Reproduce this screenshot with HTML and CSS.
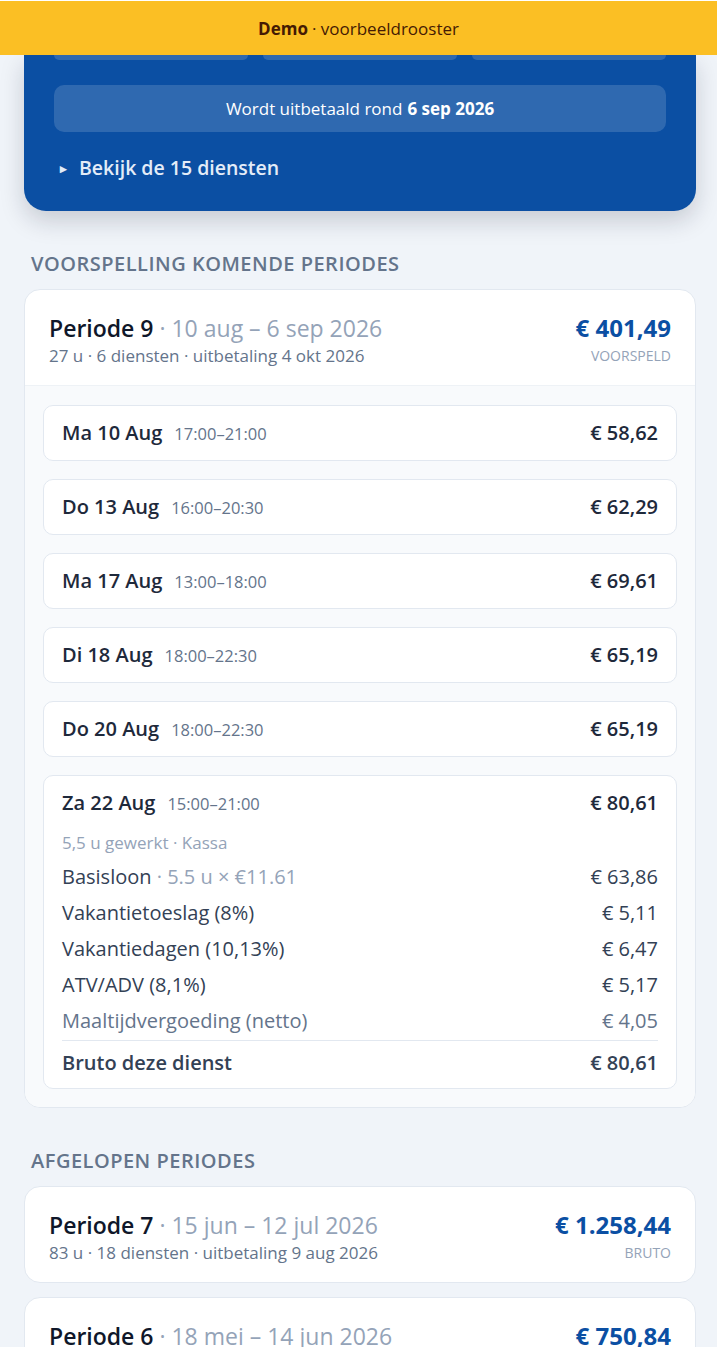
FILE: index.html
```html
<!DOCTYPE html>
<html lang="nl">
<head>
	<meta charset="utf-8">
	<title>Loonrooster · Demo</title>
	<link rel="stylesheet" href="styles.css">
</head>
<body>
	<div class="demo-bar"><b>Demo</b> · voorbeeldrooster</div>

	<main class="page">
		<section class="current">
			<div class="stats">
				<div class="stat"></div>
				<div class="stat"></div>
				<div class="stat"></div>
			</div>
			<div class="payout">Wordt uitbetaald rond <b>6 sep 2026</b></div>
			<div class="toggle"><span class="caret">&#9656;</span> Bekijk de 15 diensten</div>
		</section>

		<h2 class="section-title">Voorspelling komende periodes</h2>
		<div class="period-list">
			<div class="period">
				<div class="period-head">
					<div>
						<div class="period-title">Periode 9 <span class="range">· 10 aug – 6 sep 2026</span></div>
						<div class="period-sub">27 u · 6 diensten · uitbetaling 4 okt 2026</div>
					</div>
					<div class="period-total">
						<div class="amount">€ 401,49</div>
						<div class="tag">Voorspeld</div>
					</div>
				</div>
				<div class="period-body">
					<div class="shift">
						<div class="shift-row"><div><span class="day">Ma 10 Aug</span><span class="time">17:00–21:00</span></div><span class="pay">€ 58,62</span></div>
					</div>
					<div class="shift">
						<div class="shift-row"><div><span class="day">Do 13 Aug</span><span class="time">16:00–20:30</span></div><span class="pay">€ 62,29</span></div>
					</div>
					<div class="shift">
						<div class="shift-row"><div><span class="day">Ma 17 Aug</span><span class="time">13:00–18:00</span></div><span class="pay">€ 69,61</span></div>
					</div>
					<div class="shift">
						<div class="shift-row"><div><span class="day">Di 18 Aug</span><span class="time">18:00–22:30</span></div><span class="pay">€ 65,19</span></div>
					</div>
					<div class="shift">
						<div class="shift-row"><div><span class="day">Do 20 Aug</span><span class="time">18:00–22:30</span></div><span class="pay">€ 65,19</span></div>
					</div>
					<div class="shift open">
						<div class="shift-row"><div><span class="day">Za 22 Aug</span><span class="time">15:00–21:00</span></div><span class="pay">€ 80,61</span></div>
						<div class="shift-meta">5,5 u gewerkt · Kassa</div>
						<div class="line"><span>Basisloon <span class="muted">· 5.5 u × €11.61</span></span><span>€ 63,86</span></div>
						<div class="line"><span>Vakantietoeslag (8%)</span><span>€ 5,11</span></div>
						<div class="line"><span>Vakantiedagen (10,13%)</span><span>€ 6,47</span></div>
						<div class="line"><span>ATV/ADV (8,1%)</span><span>€ 5,17</span></div>
						<div class="line soft"><span>Maaltijdvergoeding (netto)</span><span>€ 4,05</span></div>
						<div class="line total"><span>Bruto deze dienst</span><span>€ 80,61</span></div>
					</div>
				</div>
			</div>
		</div>

		<h2 class="section-title">Afgelopen periodes</h2>
		<div class="period-list">
			<div class="period">
				<div class="period-head">
					<div>
						<div class="period-title">Periode 7 <span class="range">· 15 jun – 12 jul 2026</span></div>
						<div class="period-sub">83 u · 18 diensten · uitbetaling 9 aug 2026</div>
					</div>
					<div class="period-total">
						<div class="amount">€ 1.258,44</div>
						<div class="tag">Bruto</div>
					</div>
				</div>
			</div>
			<div class="period">
				<div class="period-head">
					<div>
						<div class="period-title">Periode 6 <span class="range">· 18 mei – 14 jun 2026</span></div>
					</div>
					<div class="period-total">
						<div class="amount">€ 750,84</div>
					</div>
				</div>
			</div>
		</div>
	</main>
</body>
</html>
```

FILE: styles.css
```css
* {
	box-sizing: border-box;
}
body {
	margin: 0;
	background-color: #f0f4f9;
	color: #1e293b;
	font-family: "Open Sans", "Noto Sans", sans-serif;
}
.demo-bar {
	position: sticky;
	top: 0;
	z-index: 10;
	height: 55px;
	border-top: 1px solid #fff;
	background-color: #fbbf24;
	color: #451a03;
	font-size: 17px;
	display: flex;
	align-items: center;
	justify-content: center;
	gap: 4px;
}
.page {
	padding: 0 21px 0 24px;
}
.current {
	background-color: #0b4fa3;
	color: #fff;
	border-radius: 0 0 22px 22px;
	padding: 0 30px 30px;
	box-shadow: 0 10px 24px rgba(15, 23, 42, 0.18);
}
.stats {
	display: grid;
	grid-template-columns: 1fr 1fr 1fr;
	gap: 15px;
}
.stat {
	height: 5px;
	background-color: rgba(255, 255, 255, 0.15);
	border-radius: 0 0 10px 10px;
}
.payout {
	margin-top: 25px;
	height: 47px;
	border-radius: 10px;
	background-color: rgba(255, 255, 255, 0.15);
	display: flex;
	align-items: center;
	justify-content: center;
	gap: 5px;
	font-size: 17px;
}
.toggle {
	margin-top: 23px;
	font-size: 19.5px;
	font-weight: 600;
	line-height: 26px;
	color: #e3ecf8;
	display: flex;
	align-items: center;
	gap: 12px;
	padding-left: 6px;
}
.caret {
	font-size: 13px;
}
.section-title {
	margin: 40px 0 12px 7px;
	font-size: 20px;
	line-height: 26px;
	font-weight: 600;
	text-transform: uppercase;
	letter-spacing: 0.5px;
	color: #64748b;
}
.period-list {
	display: flex;
	flex-direction: column;
	gap: 14px;
}
.period {
	background-color: #fff;
	border: 1px solid #e2e8f0;
	border-radius: 16px;
	overflow: hidden;
}
.period-head {
	display: flex;
	justify-content: space-between;
	align-items: flex-start;
	padding: 24px 24px 18px;
}
.period-title {
	font-size: 23px;
	font-weight: 600;
	line-height: 28px;
	color: #0f172a;
}
.range {
	color: #94a3b8;
	font-weight: 400;
}
.period-sub {
	font-size: 17px;
	line-height: 22px;
	color: #64748b;
	margin-top: 3px;
}
.period-total {
	text-align: right;
}
.amount {
	font-size: 24px;
	font-weight: 700;
	line-height: 28px;
	color: #0b4fa3;
}
.tag {
	font-size: 14px;
	line-height: 22px;
	color: #94a3b8;
	text-transform: uppercase;
	margin-top: 3px;
}
.period-body {
	background-color: #f8fafc;
	border-top: 1px solid #eef2f6;
	padding: 19px 18px 18px;
	display: flex;
	flex-direction: column;
	gap: 18px;
}
.shift {
	background-color: #fff;
	border: 1px solid #e2e8f0;
	border-radius: 10px;
	padding: 15px 18px 14px;
}
.shift.open {
	padding-bottom: 11px;
}
.shift-row {
	display: flex;
	justify-content: space-between;
	align-items: baseline;
	line-height: 24px;
}
.day {
	font-size: 20px;
	font-weight: 600;
	margin-right: 12px;
}
.time {
	font-size: 16.5px;
	color: #64748b;
}
.pay {
	font-size: 20px;
	font-weight: 600;
}
.shift-meta {
	margin: 17px 0 6px;
	font-size: 17px;
	color: #94a3b8;
	line-height: 20px;
}
.line {
	display: flex;
	justify-content: space-between;
	font-size: 20px;
	line-height: 36px;
	color: #334155;
}
.line .muted {
	color: #94a3b8;
}
.line.soft {
	color: #64748b;
}
.line.total {
	border-top: 1px solid #e2e8f0;
	margin-top: 1px;
	padding-top: 8px;
	line-height: 28px;
	font-weight: 600;
}
```
